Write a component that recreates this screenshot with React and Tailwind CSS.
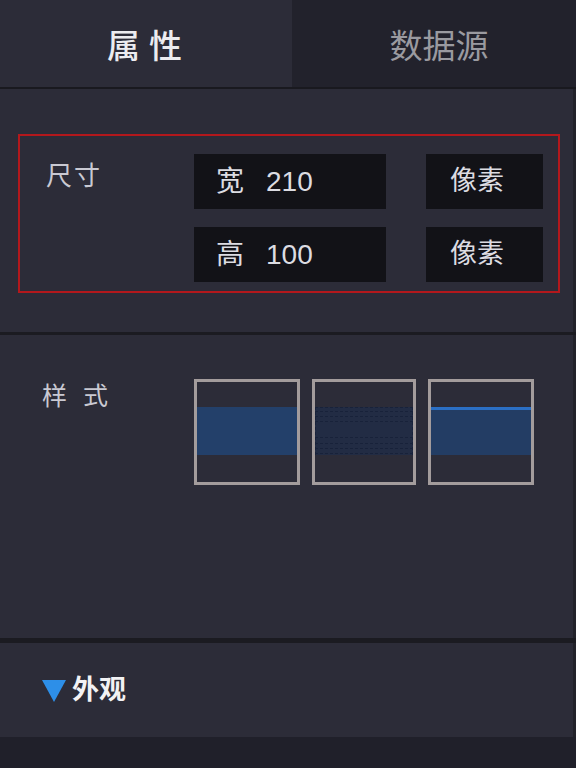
const font = 'font-["Liberation_Sans","Noto_Sans_CJK_SC",sans-serif]'

function SizeRow({ name, value }) {
  return (
    <div className="flex">
      <div className="w-[192px] h-[55px] bg-[#121217] flex items-center pl-[22px] text-[28px] leading-none text-[#dcdce2]">
        <span>{name}</span>
        <span className="ml-[22px]">{value}</span>
      </div>
      <div className="ml-[40px] w-[117px] h-[55px] bg-[#121217] flex items-center pl-[24px] text-[27px] leading-none text-[#dcdce2]">
        像素
      </div>
    </div>
  )
}

function StyleBox({ narrow, children }) {
  return (
    <div className={`${narrow ? 'w-[104px]' : 'w-[106px]'} h-[106px] border-[3px] border-[#a39c9c] flex flex-col`}>
      <div className="h-[25px]" />
      {children}
    </div>
  )
}

export default function App() {
  return (
    <div className={`w-[576px] h-[768px] bg-[#20202a] ${font}`}>
      {/* Tabs */}
      <div className="flex h-[87px]">
        <div className="w-[292px] bg-[#2c2c38] flex items-center justify-center pt-[6px] text-[33px] leading-none font-medium text-[#ececf0] tracking-[9px] pl-[6px]">
          属性
        </div>
        <div className="flex-1 bg-[#22222c] flex items-center justify-center pt-[6px] pl-[10px] text-[33px] leading-none text-[#9a9aa0]">
          数据源
        </div>
      </div>
      <div className="h-[2px] bg-[#19191f]" />

      {/* Size section */}
      <div className="h-[243px] bg-[#2c2c38] border-r-[3px] border-[#22222a] pt-[45px]">
        <div className="ml-[18px] w-[542px] h-[159px] border-2 border-[#b3181c] flex pl-[26px] pt-[18px]">
          <div className="w-[148px] pt-[9px] text-[26px] leading-none text-[#c9c9d2] tracking-[2px]">尺寸</div>
          <div className="flex flex-col gap-[18px]">
            <SizeRow name="宽" value="210" />
            <SizeRow name="高" value="100" />
          </div>
        </div>
      </div>
      <div className="h-[3px] bg-[#1b1b21]" />

      {/* Style section */}
      <div className="h-[303px] bg-[#2c2c38] border-r-[3px] border-[#22222a] pt-[44px] pl-[42px] flex">
        <div className="w-[152px] pt-[5px] text-[25px] leading-none text-[#c9c9d2] tracking-[16px]">样式</div>
        <div className="flex gap-[12px]">
          <StyleBox>
            <div className="h-[48px] bg-[#23406a]" />
          </StyleBox>
          <StyleBox narrow>
            <div className="h-[48px] bg-[#222c44]">
              <svg width="98" height="48" viewBox="0 0 98 48" className="block">
                {[0.5, 4.5, 9.5, 14.5, 30.5, 36.5, 41.5, 46.5].map(y => (
                  <line key={y} x1="0" y1={y} x2="98" y2={y} stroke="#18223a" strokeWidth="1" strokeDasharray="3 2" />
                ))}
                <line x1="0.5" y1="0" x2="0.5" y2="48" stroke="#18223a" strokeDasharray="3 2" />
                <line x1="97.5" y1="0" x2="97.5" y2="48" stroke="#18223a" strokeDasharray="3 2" />
              </svg>
            </div>
          </StyleBox>
          <StyleBox>
            <div className="h-[48px] bg-[#233d64] border-t-[3px] border-[#2b6fc4]" />
          </StyleBox>
        </div>
      </div>
      <div className="h-[5px] bg-[#1b1b21]" />

      {/* Appearance section */}
      <div className="h-[94px] bg-[#2c2c38] border-r-[3px] border-[#22222a] flex items-center pl-[42px]">
        <svg width="24" height="24" viewBox="0 0 24 24" className="block">
          <polygon points="0,2 24,2 12,24" fill="#2d8fe8" />
        </svg>
        <span className="ml-[6px] text-[27px] leading-none font-bold text-[#f2f2f4]">外观</span>
      </div>
    </div>
  )
}
